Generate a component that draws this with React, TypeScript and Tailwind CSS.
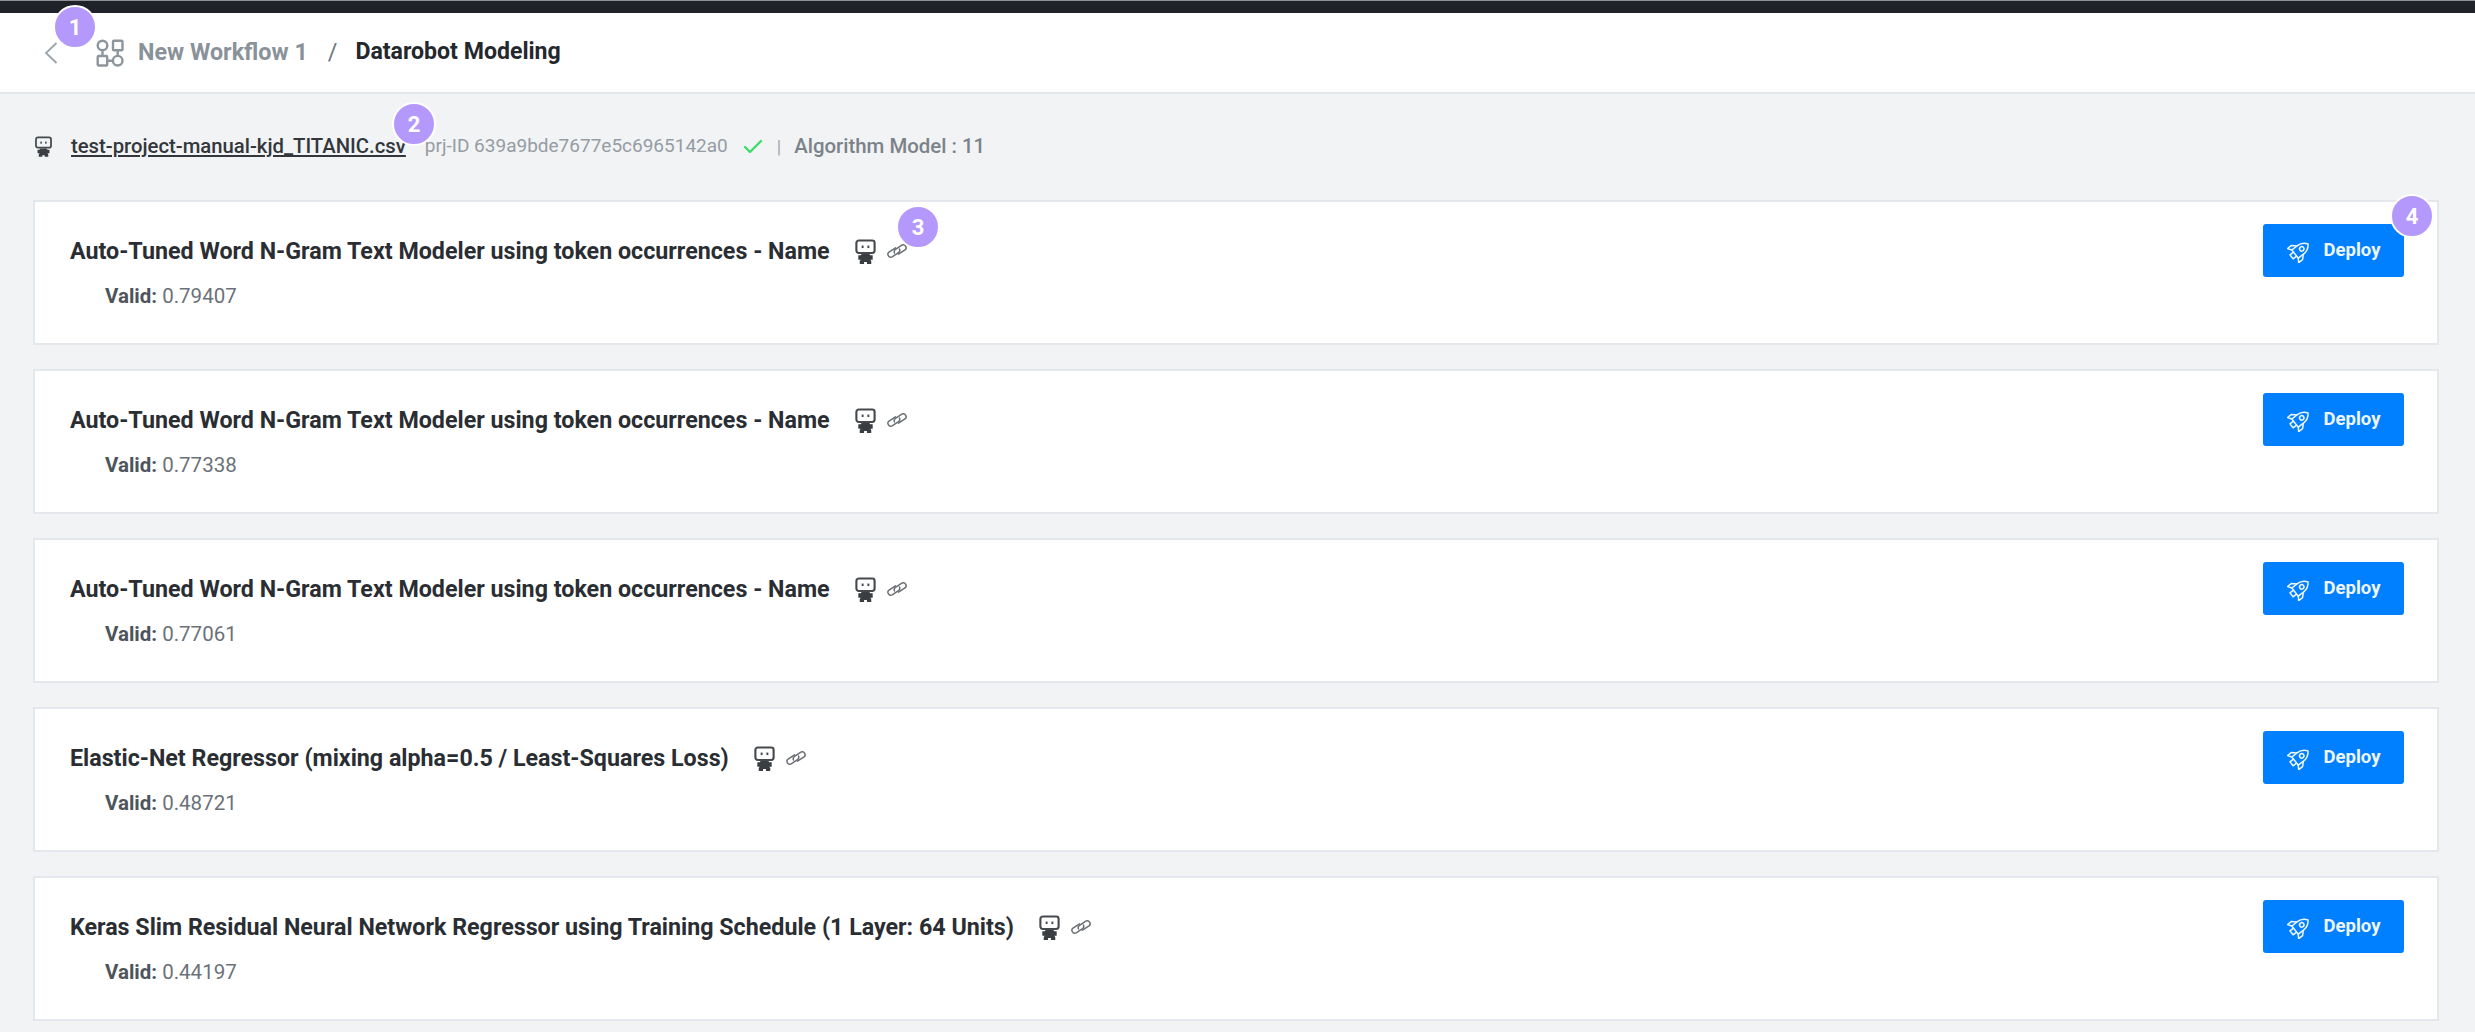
import { Check } from 'lucide-react'

type Model = {
  name: string
  valid: string
}

const models: Model[] = [
  { name: 'Auto-Tuned Word N-Gram Text Modeler using token occurrences - Name', valid: '0.79407' },
  { name: 'Auto-Tuned Word N-Gram Text Modeler using token occurrences - Name', valid: '0.77338' },
  { name: 'Auto-Tuned Word N-Gram Text Modeler using token occurrences - Name', valid: '0.77061' },
  { name: 'Elastic-Net Regressor (mixing alpha=0.5 / Least-Squares Loss)', valid: '0.48721' },
  { name: 'Keras Slim Residual Neural Network Regressor using Training Schedule (1 Layer: 64 Units)', valid: '0.44197' },
]

function RobotIcon({ className }: { className?: string }) {
  return (
    <svg viewBox="0 0 24 26" className={className} fill="none">
      <rect x="2.500" y="1.500" width="19" height="13" rx="2.500" stroke="#45494d" strokeWidth="2.200" />
      <rect x="8" y="6.800" width="2" height="2.600" fill="#45494d" />
      <rect x="14" y="6.800" width="2" height="2.600" fill="#45494d" />
      <path d="M8 15.500h8l1 1.500h2.500v4.500H17l1 1.500v3h-4.500v-2h-3v2H6v-3l1-1.500H4.500V17H7z" fill="#3a3e42" />
    </svg>
  )
}

function LinkIcon({ className }: { className?: string }) {
  return (
    <svg viewBox="0 0 22 14" className={className} fill="none" stroke="#6b6f73" strokeWidth="1.500" strokeLinecap="round">
      <path d="M9.500 3.800 3 8a2.900 2.900 0 0 0 3.200 4.800l6.300-4.200a2.900 2.900 0 0 0 1-3.600" />
      <path d="M12.500 10.200 19 6a2.900 2.900 0 0 0-3.200-4.800L9.500 5.400a2.900 2.900 0 0 0-1 3.600" />
    </svg>
  )
}

function WorkflowIcon({ className }: { className?: string }) {
  return (
    <svg viewBox="0 0 28 28" className={className} fill="none" stroke="#8d959d" strokeWidth="2.400">
      <circle cx="6.500" cy="6.500" r="4.800" />
      <rect x="17" y="1.700" width="9.500" height="9.500" rx="1" />
      <rect x="1.700" y="17" width="9.500" height="9.500" rx="1" />
      <circle cx="21.700" cy="21.700" r="4.800" />
      <path d="M6.500 11.300V17M21.700 11.200v5.700M11.200 21.700h5.700" />
    </svg>
  )
}

function RocketIcon({ className }: { className?: string }) {
  return (
    <svg viewBox="0 0 24 24" className={className} fill="none" stroke="currentColor" strokeWidth="1.500" strokeLinejoin="round">
      <g transform="rotate(52 12 12)">
        <path d="M12 0.500c3.500 2.500 5.200 6 5.200 9.500v7H6.800v-7C6.800 6.500 8.500 3 12 0.500z" />
        <circle cx="12" cy="8.500" r="2.200" />
        <path d="M6.800 10.500 3 14.500v5l3.800-2.500M17.200 10.500l3.800 4v5L17.200 17M9.500 17v4.500h5V17" />
      </g>
    </svg>
  )
}

function Badge({ n, className }: { n: number; className: string }) {
  return (
    <div className={`absolute flex h-[44px] w-[44px] items-center justify-center rounded-full border-2 border-white bg-[#b598fb] text-[22px] font-bold text-white ${className}`}>
      {n}
    </div>
  )
}

function ModelCard({ model }: { model: Model }) {
  return (
    <div className="flex h-[145px] items-start justify-between border-2 border-[#e4e7eb] bg-white pl-[35px] pr-[33px] pt-[22px]">
      <div>
        <div className="flex h-[54px] items-center">
          <span className="text-[23.250px] font-bold text-[#2a2e33]">{model.name}</span>
          <RobotIcon className="ml-[24px] h-[25px] w-[23px]" />
          <LinkIcon className="ml-[9px] h-[14px] w-[22px]" />
        </div>
        <div className="mt-[3px] pl-[35px] text-[20.500px] text-[#6b7178]">
          <span className="font-bold text-[#4e545b]">Valid:</span> {model.valid}
        </div>
      </div>
      <button className="flex h-[53px] w-[141px] items-center justify-center gap-[13px] rounded-[3px] bg-[#007fff] text-[18.500px] font-bold text-[#eef6ff]">
        <RocketIcon className="h-[24px] w-[24px]" />
        Deploy
      </button>
    </div>
  )
}

export default function App() {
  return (
    <div className="relative h-[1032px] w-[2475px] overflow-hidden bg-[#f1f3f5] font-['Roboto',sans-serif]">
      <div className="h-[13px] border-t border-[#8f9296] bg-[#1f2329]" />

      <div className="flex h-[81px] items-center border-b-2 border-[#e4e7eb] bg-white pl-[44px]">
        <svg viewBox="0 0 14 22" className="h-[22px] w-[14px]" fill="none" stroke="#9aa3ab" strokeWidth="1.800">
          <path d="M12.500 1 2 11l10.500 10" />
        </svg>
        <WorkflowIcon className="ml-[38px] h-[28px] w-[28px]" />
        <span className="ml-[14px] text-[23.300px] font-bold text-[#8a9299]">New Workflow 1</span>
        <span className="ml-[20px] text-[23.300px] text-[#6d757d]">/</span>
        <span className="ml-[18px] text-[23.100px] font-bold text-[#24282d]">Datarobot Modeling</span>
      </div>

      <div className="flex h-[106px] items-center pb-[1px] pl-[34px]">
        <RobotIcon className="h-[23px] w-[19px]" />
        <span className="ml-[18px] text-[20.300px] font-medium text-[#33373b] underline underline-offset-2">test-project-manual-kjd_TITANIC.csv</span>
        <span className="ml-[19px] text-[19px] text-[#969ca3]">prj-ID 639a9bde7677e5c6965142a0</span>
        <Check className="ml-[13px] h-[24px] w-[24px] text-[#3ddc6a]" strokeWidth={2.400} />
        <span className="ml-[12px] text-[18px] text-[#a0a6ac]">|</span>
        <span className="ml-[13px] text-[20.400px] font-medium text-[#7b8289]">Algorithm Model : 11</span>
      </div>

      <div className="flex flex-col gap-[24px] pl-[33px] pr-[36px]">
        {models.map((model, i) => (
          <ModelCard key={i} model={model} />
        ))}
      </div>

      <Badge n={1} className="left-[53px] top-[5px]" />
      <Badge n={2} className="left-[392px] top-[102px]" />
      <Badge n={3} className="left-[896px] top-[205px]" />
      <Badge n={4} className="left-[2390px] top-[194px]" />
    </div>
  )
}
